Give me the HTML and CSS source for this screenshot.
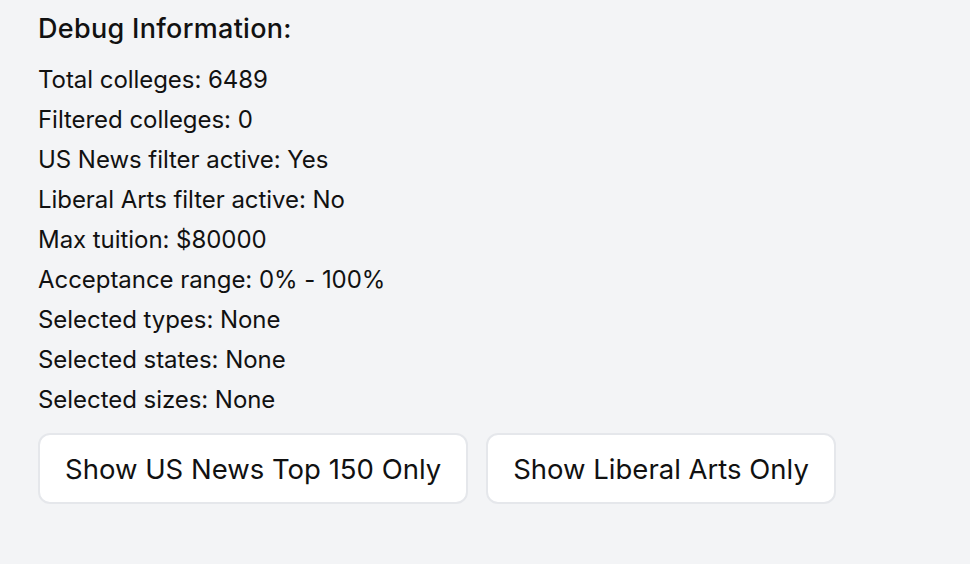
FILE: index.html
```html
<!DOCTYPE html>
<html>
<head>
<meta charset="utf-8">
<link rel="stylesheet" href="styles.css">
</head>
<body>
<div class="debug">
  <h3 class="title">Debug Information:</h3>
  <div class="lines">
    <p>Total colleges: 6489</p>
    <p>Filtered colleges: 0</p>
    <p>US News filter active: Yes</p>
    <p>Liberal Arts filter active: No</p>
    <p>Max tuition: $80000</p>
    <p>Acceptance range: 0% - 100%</p>
    <p>Selected types: None</p>
    <p>Selected states: None</p>
    <p>Selected sizes: None</p>
  </div>
  <div class="actions">
    <button class="btn">Show US News Top 150 Only</button>
    <button class="btn">Show Liberal Arts Only</button>
  </div>
</div>
</body>
</html>
```

FILE: styles.css
```css
html, body {
  margin: 0;
  padding: 0;
  background: #f3f4f6;
  color: #111111;
  font-family: Inter, "Noto Sans", sans-serif;
}
.debug {
  padding: 12px 0 0 38px;
}
.title {
  margin: 0 0 14px 0;
  font-size: 27px;
  font-weight: 500;
  line-height: 34px;
  letter-spacing: 0.3px;
}
.lines p {
  margin: 0;
  font-size: 24px;
  line-height: 40px;
  letter-spacing: -0.05px;
}
.actions {
  display: flex;
  gap: 18px;
  margin-top: 13px;
}
.btn {
  font-family: inherit;
  font-size: 27.5px;
  color: #111111;
  background: #ffffff;
  border: 2px solid #e5e7eb;
  border-radius: 12px;
  height: 71px;
  padding: 0 25px;
}
```
